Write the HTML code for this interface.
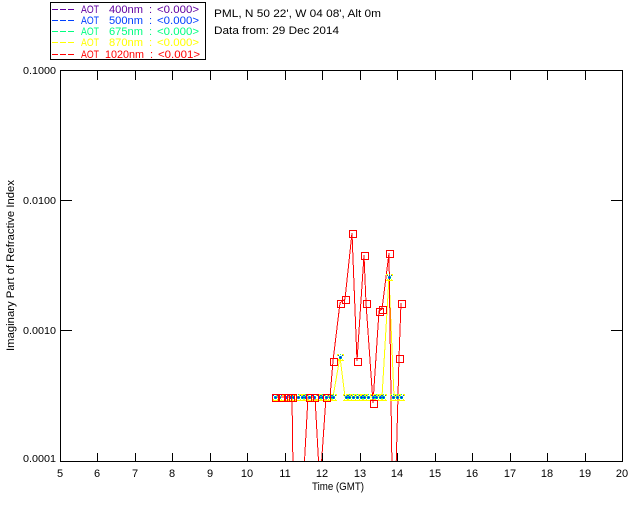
<!DOCTYPE html>
<html>
<head>
<meta charset="utf-8">
<style>
html,body{margin:0;padding:0;background:#fff}
svg{display:block}
text{font-family:"Liberation Sans",sans-serif;font-size:11px}
</style>
</head>
<body>
<svg width="640" height="512" viewBox="0 0 640 512" xmlns="http://www.w3.org/2000/svg">
<defs>
<clipPath id="plot"><rect x="60" y="71" width="562" height="390"/></clipPath>
<g id="m" shape-rendering="crispEdges">
<path fill="#ffff00" d="M-3-3h2v1h-2zM2-3h2v1h-2zM-3 3h7v1h-7zM-3-2h2v1h-2zM2-2h2v1h-2zM-2 2h1v1h-1zM2 2h1v1h-1z"/>
<path fill="#00ff80" d="M-1-1h1v1h-1zM1-1h1v1h-1zM-1 1h1v1h-1zM1 1h1v1h-1zM0-3h1v1h-1z"/>
<path fill="#0040ff" d="M0-1h1v3h-1zM-1 0h3v1h-3zM-2-2h1v1h-1zM2-2h1v1h-1z"/>
</g>
<rect id="s" x="-3" y="-3" width="7" height="7" fill="none" stroke="#f00" stroke-width="1"/>
</defs>

<!-- legend -->
<rect x="50.5" y="2.5" width="155" height="57" fill="#fff" stroke="#000" shape-rendering="crispEdges"/>
<g stroke-width="1" stroke-dasharray="6 2" shape-rendering="crispEdges">
<path d="M52 9.5H75" stroke="#6000a0"/>
<path d="M52 20.5H75" stroke="#0040ff"/>
<path d="M52 31.5H75" stroke="#00ff80"/>
<path d="M52 42.5H75" stroke="#ffff00"/>
<path d="M52 54.5H75" stroke="#ff0000"/>
</g>
<g fill="#6000a0">
<text x="81" y="13" textLength="18" lengthAdjust="spacingAndGlyphs">AOT</text><text x="109" y="13" textLength="34" lengthAdjust="spacingAndGlyphs">400nm</text><text x="149" y="13">:</text><text x="157" y="13" textLength="42" lengthAdjust="spacingAndGlyphs">&lt;0.000&gt;</text>
</g>
<g fill="#0040ff">
<text x="81" y="24" textLength="18" lengthAdjust="spacingAndGlyphs">AOT</text><text x="109" y="24" textLength="34" lengthAdjust="spacingAndGlyphs">500nm</text><text x="149" y="24">:</text><text x="157" y="24" textLength="42" lengthAdjust="spacingAndGlyphs">&lt;0.000&gt;</text>
</g>
<g fill="#00ff80">
<text x="81" y="35" textLength="18" lengthAdjust="spacingAndGlyphs">AOT</text><text x="109" y="35" textLength="34" lengthAdjust="spacingAndGlyphs">675nm</text><text x="149" y="35">:</text><text x="157" y="35" textLength="42" lengthAdjust="spacingAndGlyphs">&lt;0.000&gt;</text>
</g>
<g fill="#ffff00">
<text x="81" y="46" textLength="18" lengthAdjust="spacingAndGlyphs">AOT</text><text x="109" y="46" textLength="34" lengthAdjust="spacingAndGlyphs">870nm</text><text x="149" y="46">:</text><text x="157" y="46" textLength="42" lengthAdjust="spacingAndGlyphs">&lt;0.000&gt;</text>
</g>
<g fill="#ff0000">
<text x="81" y="58" textLength="18" lengthAdjust="spacingAndGlyphs">AOT</text><text x="105" y="58" textLength="39" lengthAdjust="spacingAndGlyphs">1020nm</text><text x="150" y="58">:</text><text x="158" y="58" textLength="42" lengthAdjust="spacingAndGlyphs">&lt;0.001&gt;</text>
</g>
<text x="214" y="17" fill="#000" textLength="167" lengthAdjust="spacingAndGlyphs">PML, N 50 22', W 04 08', Alt 0m</text>
<text x="214" y="34" fill="#000" textLength="125" lengthAdjust="spacingAndGlyphs">Data from: 29 Dec 2014</text>

<!-- y labels -->
<g fill="#000">
<text x="23" y="74" style="font-size:10px" textLength="33" lengthAdjust="spacingAndGlyphs">0.1000</text>
<text x="23" y="204" style="font-size:10px" textLength="33" lengthAdjust="spacingAndGlyphs">0.0100</text>
<text x="23" y="334" style="font-size:10px" textLength="33" lengthAdjust="spacingAndGlyphs">0.0010</text>
<text x="23" y="462" style="font-size:10px" textLength="33" lengthAdjust="spacingAndGlyphs">0.0001</text>
</g>
<!-- x labels -->
<g fill="#000" text-anchor="middle">
<text x="60" y="477">5</text><text x="97" y="477">6</text><text x="135" y="477">7</text><text x="172" y="477">8</text><text x="210" y="477">9</text><text x="247" y="477">10</text><text x="285" y="477">11</text><text x="322" y="477">12</text><text x="360" y="477">13</text><text x="397" y="477">14</text><text x="435" y="477">15</text><text x="472" y="477">16</text><text x="510" y="477">17</text><text x="547" y="477">18</text><text x="585" y="477">19</text><text x="622" y="477">20</text>
</g>
<text x="312" y="490" fill="#000" textLength="52" lengthAdjust="spacingAndGlyphs">Time (GMT)</text>
<text transform="translate(14,351) rotate(-90)" fill="#000" textLength="171" lengthAdjust="spacingAndGlyphs">Imaginary Part of Refractive Index</text>

<!-- yellow series -->
<polyline fill="none" stroke="#ffff00" shape-rendering="crispEdges" points="333,397 340,357 345,397 382,397 389,277 394,397 401,397"/>

<!-- red series -->
<g clip-path="url(#plot)">
<polyline fill="none" stroke="#f00" shape-rendering="crispEdges" points="275,397 292,397 293,470 304,470 308,397 315,397 319,470 321,470 326,397 330,397 333,361 340,303 345,299 352,233 357,361 364,255 366,303 373,403 379,311 382,309 389,253 392,470 396,470 399,358 401,303"/>
</g>

<!-- plot frame -->
<path fill="none" stroke="#000" stroke-width="1" shape-rendering="crispEdges" d="M60.5 70.5H622.5V461.5H60.5Z"/>
<path fill="none" stroke="#000" stroke-width="1" shape-rendering="crispEdges" d="
M97.5 461V453M135.5 461V453M172.5 461V453M210.5 461V453M247.5 461V453M285.5 461V453M322.5 461V453M360.5 461V453M397.5 461V453M435.5 461V453M472.5 461V453M510.5 461V453M547.5 461V453M585.5 461V453
M97.5 71V80M135.5 71V80M172.5 71V80M210.5 71V80M247.5 71V80M285.5 71V80M322.5 71V80M360.5 71V80M397.5 71V80M435.5 71V80M472.5 71V80M510.5 71V80M547.5 71V80M585.5 71V80
M60 200.5H72M60 330.5H72M622 200.5H611M622 330.5H611"/>

<!-- blue / green / yellow markers -->
<g>
<use href="#m" x="275" y="397"/><use href="#m" x="279" y="397"/><use href="#m" x="286" y="397"/><use href="#m" x="290" y="397"/><use href="#m" x="293" y="397"/><use href="#m" x="298" y="397"/><use href="#m" x="302" y="397"/><use href="#m" x="305" y="397"/><use href="#m" x="309" y="397"/><use href="#m" x="314" y="397"/><use href="#m" x="319" y="397"/><use href="#m" x="322" y="397"/><use href="#m" x="326" y="397"/><use href="#m" x="330" y="397"/><use href="#m" x="333" y="397"/>
<use href="#m" x="340" y="357"/>
<use href="#m" x="346" y="397"/><use href="#m" x="349" y="397"/><use href="#m" x="353" y="397"/><use href="#m" x="357" y="397"/><use href="#m" x="361" y="397"/><use href="#m" x="364" y="397"/><use href="#m" x="368" y="397"/><use href="#m" x="373" y="397"/><use href="#m" x="376" y="397"/><use href="#m" x="380" y="397"/><use href="#m" x="383" y="397"/>
<use href="#m" x="389" y="277"/>
<use href="#m" x="393" y="397"/><use href="#m" x="397" y="397"/><use href="#m" x="401" y="397"/>
</g>

<!-- red squares -->
<g shape-rendering="crispEdges" transform="translate(.5,.5)">
<use href="#s" x="275" y="397"/><use href="#s" x="281" y="397"/><use href="#s" x="287" y="397"/><use href="#s" x="290" y="397"/><use href="#s" x="292" y="397"/><use href="#s" x="309" y="397"/><use href="#s" x="314" y="397"/><use href="#s" x="326" y="397"/>
<use href="#s" x="333" y="361"/><use href="#s" x="340" y="303"/><use href="#s" x="345" y="299"/><use href="#s" x="352" y="233"/><use href="#s" x="357" y="361"/><use href="#s" x="364" y="255"/><use href="#s" x="366" y="303"/><use href="#s" x="373" y="403"/><use href="#s" x="379" y="311"/><use href="#s" x="382" y="309"/><use href="#s" x="389" y="253"/><use href="#s" x="399" y="358"/><use href="#s" x="401" y="303"/>
</g>
</svg>
</body>
</html>
